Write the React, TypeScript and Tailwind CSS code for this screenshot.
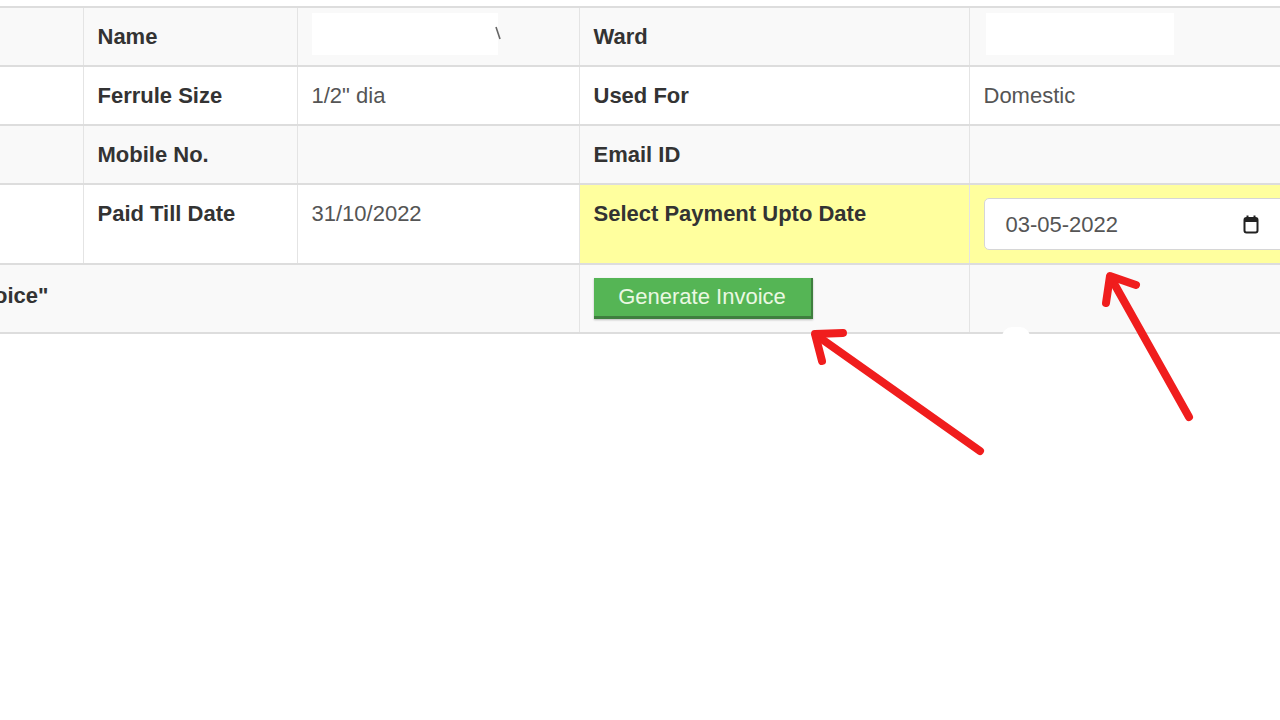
import React from "react";

const td = "border-l border-[#e4e4e4] px-[14px] py-[13px] align-top leading-[31px] text-[22px]";
const lbl = `${td} font-bold text-[#333333]`;
const val = `${td} text-[#555555]`;

function CalendarIcon() {
  return (
    <svg width="16" height="20" viewBox="0 0 16 20" className="shrink-0">
      <rect x="1.5" y="4" width="13" height="14.5" rx="2" fill="none" stroke="#222" strokeWidth="2" />
      <rect x="1.5" y="4" width="13" height="4" fill="#222" />
      <line x1="4.5" y1="1.5" x2="4.5" y2="5" stroke="#222" strokeWidth="2" />
      <line x1="11.5" y1="1.5" x2="11.5" y2="5" stroke="#222" strokeWidth="2" />
    </svg>
  );
}

export default function App() {
  return (
    <div className="relative w-[1280px] h-[720px] overflow-hidden bg-white font-['Liberation_Sans',Arial,sans-serif]">
      <div className="pt-[6px]">
        <table className="table-fixed border-collapse w-[1320px]">
          <colgroup>
            <col className="w-[83px]" />
            <col className="w-[214px]" />
            <col className="w-[282px]" />
            <col className="w-[390px]" />
            <col className="w-[351px]" />
          </colgroup>
          <tbody>
            <tr className="border-t-2 border-[#dddddd] bg-[#f9f9f9]">
              <td className={`${td} border-l-0`}></td>
              <td className={lbl}>Name</td>
              <td className={val}>
                <div className="relative h-[31px]">
                  <div className="absolute left-0 top-[-8px] w-[186px] h-[42px] bg-white" />
                  <svg className="absolute left-[182px] top-[4px]" width="8" height="16" viewBox="0 0 8 16">
                    <path d="M2 2 L6 14" stroke="#666" strokeWidth="1.6" />
                  </svg>
                </div>
              </td>
              <td className={lbl}>Ward</td>
              <td className={val}>
                <div className="relative h-[31px]">
                  <div className="absolute left-[2px] top-[-8px] w-[188px] h-[42px] bg-white" />
                </div>
              </td>
            </tr>
            <tr className="border-t-2 border-[#dddddd] bg-white">
              <td className={`${td} border-l-0`}></td>
              <td className={lbl}>Ferrule Size</td>
              <td className={val}>1/2" dia</td>
              <td className={lbl}>Used For</td>
              <td className={val}>Domestic</td>
            </tr>
            <tr className="border-t-2 border-[#dddddd] bg-[#f9f9f9]">
              <td className={`${td} border-l-0`}></td>
              <td className={lbl}>Mobile No.</td>
              <td className={val}></td>
              <td className={lbl}>Email ID</td>
              <td className={val}></td>
            </tr>
            <tr className="border-t-2 border-[#dddddd] bg-white">
              <td className={`${td} border-l-0`}></td>
              <td className={lbl}>Paid Till Date</td>
              <td className={val}>31/10/2022</td>
              <td className={`${lbl} bg-[#ffff9e]`}>Select Payment Upto Date</td>
              <td className={`${val} bg-[#ffff9e]`}>
                <div className="flex items-center h-[52px] w-[310px] bg-white border border-[#d6d6d6] rounded-[5px] pl-[21px] pr-[20px]">
                  <span className="flex-1 text-[#555555]">03-05-2022</span>
                  <div className="mr-[14px]">
                    <CalendarIcon />
                  </div>
                </div>
              </td>
            </tr>
            <tr className="border-t-2 border-b-2 border-[#dddddd] bg-[#f9f9f9]">
              <td colSpan={3} className={`${td} border-l-0 pl-0 font-bold text-[#333333] pt-[15px]`}>
                <span className="ml-[-6px]">oice"</span>
              </td>
              <td className={`${td} pt-[13px]`}>
                <button className="w-[219px] h-[41px] bg-[#55b555] text-[#eaf8e2] text-[22px] leading-[38px] border-b-[3px] border-r-[2px] border-[#3f7f3f] shadow-[0_1px_2px_rgba(0,0,0,0.25)]">
                  Generate Invoice
                </button>
              </td>
              <td className={td}></td>
            </tr>
          </tbody>
        </table>
      </div>

      <div className="absolute left-[1002px] top-[327px] w-[28px] h-[20px] rounded-full bg-white" />

      <svg className="absolute left-0 top-0 pointer-events-none" width="1280" height="720" viewBox="0 0 1280 720">
        <g stroke="#f01d1d" strokeWidth="8" strokeLinecap="round" strokeLinejoin="round" fill="none">
          <line x1="980" y1="451" x2="816" y2="335" />
          <polyline points="843,333 815,334 822,361" />
          <line x1="1189" y1="417" x2="1111" y2="278" />
          <polyline points="1136,285 1110,276 1106,303" />
        </g>
      </svg>
    </div>
  );
}
